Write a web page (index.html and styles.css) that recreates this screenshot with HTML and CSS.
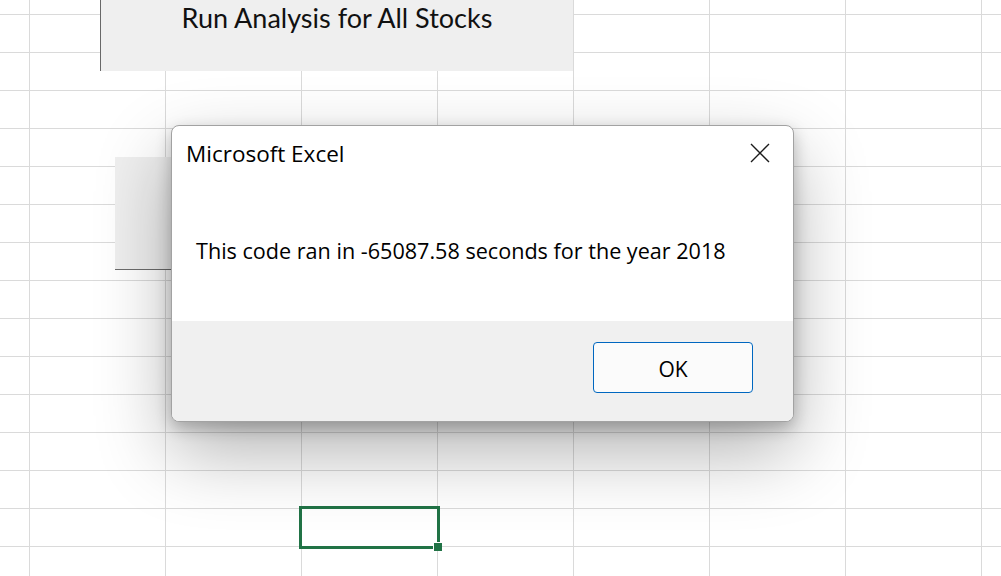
FILE: index.html
```html
<!DOCTYPE html>
<html>
<head>
<meta charset="utf-8">
<link rel="stylesheet" href="styles.css">
</head>
<body>
<div class="sheet">
  <div class="form-btn form-btn-run"><span class="form-btn-label">Run Analysis for All Stocks</span></div>
  <div class="form-btn form-btn-second"></div>
  <div class="selection"><span class="fill-handle"></span></div>

  <div class="dialog" role="dialog">
    <div class="dialog-body">
      <div class="dialog-header">
        <span class="dialog-title">Microsoft Excel</span>
        <svg class="dialog-close" width="20" height="20" viewBox="0 0 20 20"><path d="M1 1 L19 19 M19 1 L1 19" stroke="#1b1b1b" stroke-width="1.4" fill="none"/></svg>
      </div>
      <p class="dialog-message">This code ran in -65087.58 seconds for the year 2018</p>
    </div>
    <div class="dialog-footer">
      <button class="dialog-ok">OK</button>
    </div>
  </div>
</div>
</body>
</html>
```

FILE: styles.css
```css
html, body {
  margin: 0;
  padding: 0;
}
body {
  width: 1001px;
  height: 576px;
  overflow: hidden;
  background: #ffffff;
}
.sheet {
  position: relative;
  width: 1001px;
  height: 576px;
  background-color: #ffffff;
  background-image:
    linear-gradient(to right, #dadada 1px, transparent 1px),
    linear-gradient(to bottom, #dadada 1px, transparent 1px);
  background-size: 136px 38px;
  background-position: 29px 14px;
}
.form-btn {
  position: absolute;
  background: #efefef;
  box-sizing: border-box;
}
.form-btn-run {
  left: 100px;
  top: 0;
  width: 473px;
  height: 71px;
  border-left: 1px solid #686868;
  display: flex;
  justify-content: center;
  align-items: flex-start;
  padding-top: 3px;
}
.form-btn-label {
  font-family: Lato, "Open Sans", sans-serif;
  font-size: 27px;
  line-height: 30px;
  color: #111;
}
.form-btn-second {
  left: 115px;
  top: 157px;
  width: 120px;
  height: 113px;
  border-bottom: 1px solid #6c6c6c;
}
.selection {
  position: absolute;
  left: 299px;
  top: 506px;
  width: 141px;
  height: 43px;
  box-sizing: border-box;
  border: 3px solid #217346;
}
.fill-handle {
  position: absolute;
  right: -5px;
  bottom: -5px;
  width: 8px;
  height: 8px;
  background: #217346;
  border: 1px solid #ffffff;
  border-right: none;
  border-bottom: none;
}
.dialog {
  position: absolute;
  left: 171px;
  top: 125px;
  width: 623px;
  height: 297px;
  box-sizing: border-box;
  border: 1px solid #a2a2a2;
  border-radius: 8px;
  background: #ffffff;
  overflow: hidden;
  display: flex;
  flex-direction: column;
  font-family: "Open Sans", "Noto Sans", sans-serif;
  color: #000;
  box-shadow: 0 6px 16px rgba(0,0,0,0.24), 0 30px 75px rgba(0,0,0,0.30);
}
.dialog-body {
  flex: 0 0 195px;
  display: flex;
  flex-direction: column;
}
.dialog-header {
  display: flex;
  justify-content: space-between;
  align-items: flex-start;
  padding: 14px 23px 0 14px;
}
.dialog-title {
  font-size: 22.5px;
  line-height: 28px;
}
.dialog-close {
  display: block;
  margin-top: 3px;
}
.dialog-message {
  margin: 69px 0 0 24px;
  font-size: 21.6px;
  line-height: 28px;
}
.dialog-footer {
  flex: 1;
  background: #f0f0f0;
  display: flex;
  justify-content: flex-end;
  align-items: flex-start;
  padding: 21px 40px 0 0;
}
.dialog-ok {
  width: 160px;
  height: 51px;
  box-sizing: border-box;
  border: 1px solid #0067c0;
  border-radius: 4px;
  background: #fbfbfb;
  font-family: "Open Sans", "Noto Sans", sans-serif;
  font-size: 21px;
  line-height: 28px;
  color: #000;
  padding: 2px 0 0 0;
}
```
